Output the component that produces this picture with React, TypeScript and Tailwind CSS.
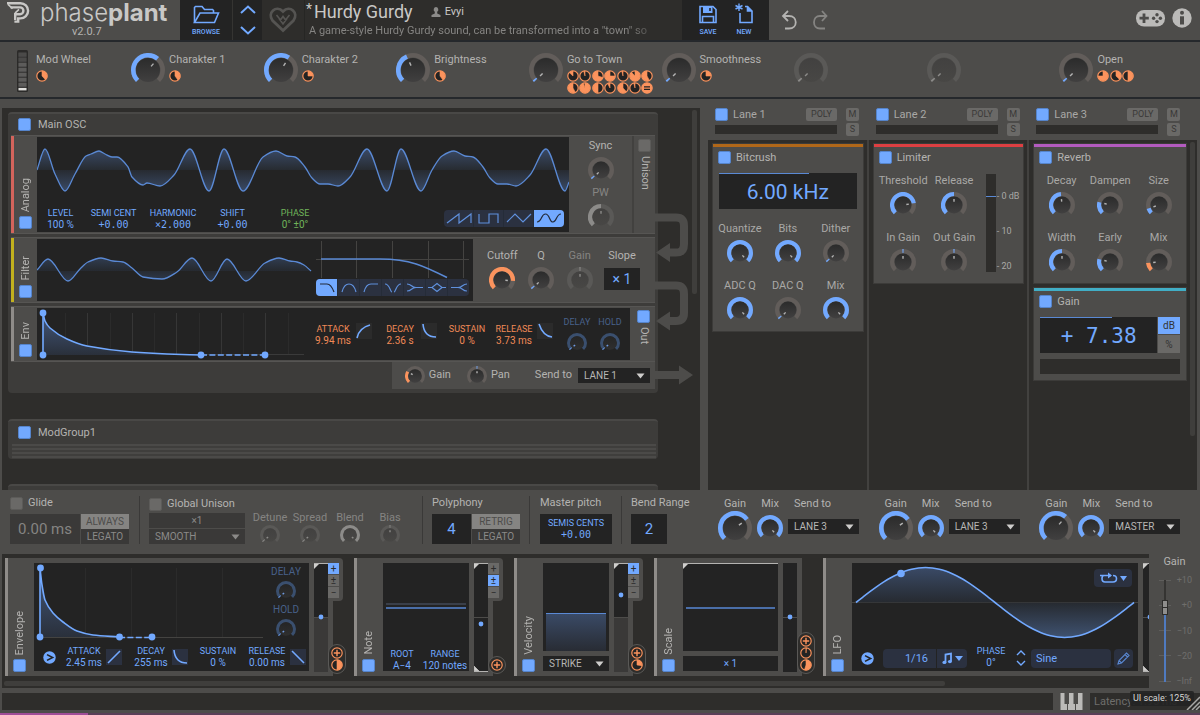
import React, { useId, useState } from 'react'

type Pt = [number, number]

// monotone cubic through the points, so that peaks stay flat
function smooth(pts: Pt[]) {
  const slopes = pts.slice(1).map((p, i) => (p[1] - pts[i][1]) / (p[0] - pts[i][0]))
  const tangents = pts.map((_, i) => {
    if (i === 0) return slopes[0]
    if (i === pts.length - 1) return slopes[i - 1]
    const a = slopes[i - 1]
    const b = slopes[i]
    return a * b <= 0 ? 0 : (2 * a * b) / (a + b)
  })
  let d = `M${pts[0][0]} ${pts[0][1]}`
  for (let i = 1; i < pts.length; i++) {
    const dx = (pts[i][0] - pts[i - 1][0]) / 3
    d += `C${pts[i - 1][0] + dx} ${pts[i - 1][1] + tangents[i - 1] * dx} ${pts[i][0] - dx} ${pts[i][1] - tangents[i] * dx} ${pts[i][0]} ${pts[i][1]}`
  }
  return d
}

const analogWave: Pt[] = [
  [37, 170], [45, 149], [55, 174], [65, 191], [75, 174], [86, 156], [91, 154], [99, 151], [105, 154], [112, 157], [117, 157],
  [128, 167], [132, 177], [143, 185], [147, 183], [160, 186], [174, 175], [190, 149], [209, 191], [224, 149],
  [243, 191], [263, 157], [276, 151], [287, 156], [295, 157], [305, 167], [312, 178], [320, 184], [328, 184],
  [338, 186], [350, 177], [367, 149], [387, 191], [401, 149], [421, 191], [432, 170], [442, 156], [454, 151],
  [465, 156], [473, 157], [483, 167], [490, 178], [498, 184], [507, 184], [516, 186], [530, 175], [546, 149],
  [565, 191], [569, 182],
]

const filterWave: Pt[] = [
  [37, 270], [48, 259], [68, 281], [80, 269], [88, 262], [101, 258], [113, 261], [123, 262], [132, 268],
  [143, 277], [162, 279], [177, 272], [192, 258], [211, 281], [227, 259], [246, 281], [265, 263], [279, 258],
  [290, 261], [297, 262], [304, 265], [311, 271],
]

const envCurve: Pt[] = [
  [43, 312], [45, 320], [50, 327], [67, 338], [87, 345], [132, 351], [167, 353], [201, 354],
]

const modEnvCurve: Pt[] = [
  [40, 568], [42, 585], [45, 600], [53, 613], [63, 622], [77, 631], [93, 635], [119, 637],
]

const lfoWave: Pt[] = Array.from({ length: 41 }, (_, i) => [
  856 + (278 * i) / 40,
  602.5 - 35 * Math.sin((i / 40) * Math.PI * 2),
])

const tones = {
  blue: { track: '#625d5a', value: '#72a9ff', top: '#2b2b2b', bottom: '#414040', tick: '#b4b4b4' },
  orange: { track: '#625d5a', value: '#fb935d', top: '#2b2b2b', bottom: '#414040', tick: '#b4b4b4' },
  dim: { track: '#3a4f6e', value: '#6695de', top: '#252525', bottom: '#2f2f2f', tick: '#6f9ae0' },
  off: { track: '#5a5957', value: '#8c8b89', top: '#424140', bottom: '#484745', tick: '#8c8b89' },
}

const knobSizes = {
  lg: { size: 34, width: 4.6, cap: 12 },
  md: { size: 26, width: 4.2, cap: 8.4 },
  sm: { size: 20, width: 3.2, cap: 6.8 },
}

type KnobProps = {
  name: string
  value: number
  size?: keyof typeof knobSizes
  tone?: keyof typeof tones
  bipolar?: boolean
}

const Knob: React.FC<KnobProps> = ({ name, value, size = 'md', tone = 'blue', bipolar }) => {
  const [v, setV] = useState(value)
  const id = useId()
  const s = knobSizes[size]
  const c = tones[tone]
  const mid = s.size / 2
  const r = mid - s.width / 2
  const at = (f: number, radius: number) => {
    const a = ((f * 270 - 135) * Math.PI) / 180
    return [mid + radius * Math.sin(a), mid - radius * Math.cos(a)]
  }
  const arc = (from: number, to: number) => {
    const [x1, y1] = at(from, r)
    const [x2, y2] = at(to, r)
    return `M${x1} ${y1}A${r} ${r} 0 ${to - from > 0.667 ? 1 : 0} 1 ${x2} ${y2}`
  }
  const from = bipolar ? Math.min(0.49, v) : 0
  const to = bipolar ? Math.max(0.51, v) : Math.max(0.025, v)
  const [px, py] = at(v, s.cap * 0.4)
  const [qx, qy] = at(v, s.cap * 0.7)
  return (
    <span className="relative block shrink-0">
      <svg width={s.size} height={s.size} className="block">
        <linearGradient id={id} x1="0" y1="0" x2="0" y2="1">
          <stop offset="0" stopColor={c.top} />
          <stop offset="1" stopColor={c.bottom} />
        </linearGradient>
        <path d={arc(0, 1)} fill="none" stroke={c.track} strokeWidth={s.width} />
        <path d={arc(from, to)} fill="none" stroke={c.value} strokeWidth={s.width} />
        <circle cx={mid} cy={mid} r={s.cap} fill={`url(#${id})`} />
        <path d={`M${px} ${py}L${qx} ${qy}`} stroke={c.tick} strokeWidth="1.4" />
      </svg>
      <input
        type="range"
        min="0"
        max="1"
        step="0.01"
        value={v}
        aria-label={name}
        onChange={(e) => setV(Number(e.target.value))}
        className="absolute inset-0 w-full h-full opacity-0"
      />
    </span>
  )
}

const KnobLabel: React.FC<KnobProps & { muted?: boolean }> = ({ muted, ...knob }) => (
  <div className="flex flex-col items-center gap-1">
    <span className={muted ? 'leading-[14px] whitespace-nowrap text-[#858482]' : 'leading-[14px] whitespace-nowrap'}>{knob.name}</span>
    <Knob {...knob} />
  </div>
)

const boxStyle =
  'appearance-none block shrink-0 w-[13px] h-[13px] rounded-xs border border-[#5c5b59] bg-[#6a6967] checked:bg-[#72a9ff] checked:border-[#5584cb]'

const Led: React.FC<{ label: string; on?: boolean; className?: string }> = ({ label, on = true, className = '' }) => (
  <label className={`flex items-center whitespace-nowrap leading-[14px] ${className}`}>
    <input type="checkbox" defaultChecked={on} className={boxStyle} />
    {label}
  </label>
)

// upright strip at the left of a module: name reads bottom to top
const SideLabel: React.FC<{ label: string; stripe: string }> = ({ label, stripe }) => (
  <label className={`flex flex-col items-center justify-end gap-1 shrink-0 w-[26px] pb-1 border-l-3 ${stripe}`}>
    <span className="[writing-mode:vertical-rl] rotate-180 leading-[14px]">{label}</span>
    <input type="checkbox" defaultChecked className={boxStyle} />
  </label>
)

// amount of a modulation: wedge grows clockwise, negative the other way
const Pie: React.FC<{ v: number | 'plus' | 'equal' }> = ({ v }) => {
  let wedge = null
  if (typeof v === 'number') {
    const a = v * 2 * Math.PI
    wedge = (
      <path
        d={`M6 6V1A5 5 0 ${Math.abs(v) > 0.5 ? 1 : 0} ${v > 0 ? 1 : 0} ${6 + 5 * Math.sin(a)} ${6 - 5 * Math.cos(a)}Z`}
        fill="#fb935d"
        stroke="#fb935d"
        strokeWidth="0.6"
      />
    )
  }
  return (
    <svg width="12" height="12" className="block">
      <circle cx="6" cy="6" r="5.2" fill={v === 'equal' ? '#fb935d' : '#232323'} stroke="#fb935d" strokeWidth="1.2" />
      {wedge}
      {v === 'plus' && <path d="M6 2.8V9.2M2.8 6H9.2" stroke="#fb935d" strokeWidth="1.4" />}
      {v === 'equal' && <path d="M3 4.8H9M3 7.4H9" stroke="#232323" strokeWidth="1.2" />}
    </svg>
  )
}

const Select: React.FC<{ name: string; value: string; className?: string; muted?: boolean }> = ({ name, value, className = '', muted }) => (
  <div className={`relative ${className}`}>
    <select
      aria-label={name}
      defaultValue={value}
      className={
        muted
          ? 'appearance-none block w-full h-full pl-[6px] text-[10px] bg-[#3a3938] text-[#8b8a88]'
          : 'appearance-none block w-full h-full pl-[6px] text-[10px] bg-[#232323] text-[#b8b7b5]'
      }
    >
      <option>{value}</option>
    </select>
    <svg width="9" height="6" className="absolute right-[5px] top-1/2 -translate-y-1/2 pointer-events-none">
      <path d="M0.5 0.5H8.5L4.5 5.5Z" fill={muted ? '#8b8a88' : '#cfcecc'} />
    </svg>
  </div>
)

const Value: React.FC<{ label: string; value: string; className?: string; mono?: boolean }> = ({ label, value, className = '', mono }) => (
  <div className={`flex flex-col items-center shrink-0 whitespace-nowrap leading-[12px] ${className}`}>
    <span className="text-[9px]">{label}</span>
    <span className={mono ? "text-[10px] font-['DejaVu_Sans_Mono',monospace]" : 'text-[10px]'}>{value}</span>
  </div>
)

const CurveIcon: React.FC<{ d: string; name: string; bg?: string }> = ({ d, name, bg = 'bg-[#2b2b2b]' }) => (
  <button aria-label={name} className={`shrink-0 w-4 h-4 ${bg}`}>
    <svg width="16" height="16" className="block">
      <path d={d} fill="none" stroke="#72a9ff" strokeWidth="1.6" />
    </svg>
  </button>
)

const Header = () => (
  <header className="flex h-[42px] shrink-0 border-b-2 border-[#25282c]">
    <div className="flex w-[180px] shrink-0">
      <svg width="24" height="24" className="block ml-[6px] shrink-0" fill="none" stroke="#c9c8c6">
        <path d="M1 3.2H14.5A7.6 7.6 0 0 1 14.5 18.4H12.2V21.6H8.4" strokeWidth="2.4" />
        <path d="M4.5 7.4H14A3.4 3.4 0 0 1 14 14.2H9.2V20" strokeWidth="2.4" />
        <path d="M2 4.4L6.5 8.6M9 13.2L13 9.4" strokeWidth="1.6" />
      </svg>
      <div className="ml-[10px]">
        <h1 className="font-[Inter,sans-serif] text-[24px] leading-[25px] font-light text-[#c9c8c6] whitespace-nowrap">
          phase<b className="font-bold">plant</b>
        </h1>
        <p className="ml-8 leading-[14px]">v2.0.7</p>
      </div>
    </div>
    <button className="flex flex-col items-center w-[53px] shrink-0 pt-[5px] gap-1 bg-[#232323] border-r border-[#353432] text-[#72a9ff]">
      <svg width="28" height="19" fill="none" stroke="#72a9ff" strokeWidth="1.6">
        <path d="M2.5 17.5V2.5L3.5 1.5H10L12.5 4.5H20.5L21.5 5.5V8" />
        <path d="M2.5 17.5L8 8H26.5L22.5 17.5Z" />
      </svg>
      <span className="text-[7px] leading-[9px] font-medium">BROWSE</span>
    </button>
    <div className="flex flex-col justify-between w-[29px] shrink-0 items-center py-[5px] bg-[#232323]">
      {['M1 8L8 1.5L15 8', 'M1 1L8 7.5L15 1'].map((d, i) => (
        <button key={d} aria-label={i ? 'Next preset' : 'Previous preset'}>
          <svg width="16" height="9" className="block" fill="none" stroke="#72a9ff" strokeWidth="2">
            <path d={d} />
          </svg>
        </button>
      ))}
    </div>
    <button aria-label="Favourite" className="flex items-center justify-center w-[43px] shrink-0 bg-[#2e2d2b] border-r border-[#262624]">
      <svg width="30" height="28" fill="none" stroke="#555452">
        <path d="M15 24.5L4.5 14.5C-1 7 8 -1.5 15 5.5C22 -1.5 31 7 25.5 14.5Z" strokeWidth="2.8" />
        <path d="M8.5 9L12.5 14L15 10.5L17.5 14L21.5 9M11 12.5L15 18L19 12.5" strokeWidth="1.6" />
      </svg>
    </button>
    <div className="flex flex-col flex-1 min-w-0 max-w-[377px] bg-[#2e2d2b] pl-px">
      <div className="flex items-center h-[24px] text-[#c9c8c6]">
        <span className="text-[14px] leading-[18px] w-[8px] mb-[6px]">*</span>
        <span className="text-[18px] leading-[24px]">Hurdy Gurdy</span>
        <svg width="10" height="10" className="ml-[18px] mr-[4px]" fill="#8c8b89">
          <path d="M5 0a2.4 2.6 0 0 1 1.2 4.8V6.4L9.5 8V10H.5V8L3.8 6.4V4.8A2.4 2.6 0 0 1 5 0Z" />
        </svg>
        <span className="pt-px">Evyi</span>
      </div>
      <p className="overflow-hidden whitespace-nowrap leading-[14px] w-[354px] ml-[3px] text-[#858482] [mask-image:linear-gradient(to_right,black_90%,transparent)]">
        A game-style Hurdy Gurdy sound, can be transformed into a "town" so
      </p>
    </div>
    <div className="flex w-[87px] shrink-0 pl-2 bg-[#232323] text-[#72a9ff] text-[7px] font-medium">
      <button className="flex flex-col items-center w-[36px] pt-[5px] gap-1">
        <svg width="20" height="19" fill="none" stroke="#72a9ff" strokeWidth="1.6">
          <path d="M2 1.5H15L18 4.5V17.5H2Z" />
          <path d="M5 1V8H14.5V1Z" fill="#72a9ff" stroke="none" />
          <path d="M12 3V6" stroke="#232323" />
          <path d="M4.5 17V11.5H15.5V17" />
        </svg>
        <span className="leading-[9px]">SAVE</span>
      </button>
      <button className="flex flex-col items-center w-[36px] pt-[3px] gap-1">
        <svg width="20" height="21" fill="none" stroke="#72a9ff" strokeWidth="1.6">
          <path d="M11 3.5H13.5L18 8V19.5H6V10" />
          <path d="M13.5 3.5V8H18" fill="#72a9ff" />
          <path d="M5 0.5V8M1.5 2.5L8.5 6M8.5 2.5L1.5 6" strokeWidth="1.4" />
        </svg>
        <span className="leading-[9px]">NEW</span>
      </button>
    </div>
    <div className="flex items-center gap-[14px] pl-3 mr-auto">
      <button aria-label="Undo">
        <svg width="17" height="21" className="block" fill="none" stroke="#b4b3b1" strokeWidth="1.8">
          <path d="M7 1L2 6L7 11M2 6H8C17 6 17 18.5 8 18.5H4" />
        </svg>
      </button>
      <button aria-label="Redo">
        <svg width="17" height="21" className="block" fill="none" stroke="#858482" strokeWidth="1.8">
          <path d="M10 1L14.5 6L10 11M14.5 6H8C0 6 0 18.5 8 18.5H13" />
        </svg>
      </button>
    </div>
    <div className="flex items-center gap-[7px] pr-2 mb-1">
      <button aria-label="Controller">
        <svg width="29" height="17" className="block">
          <rect width="29" height="16.5" rx="8" fill="#bbbab8" />
          <path d="M8 3.5V13M3.5 8.2H12.8" stroke="#4d4c4a" strokeWidth="2.8" />
          <g fill="#4d4c4a">
            <circle cx="21" cy="4.8" r="1.7" />
            <circle cx="21" cy="11.6" r="1.7" />
            <circle cx="17.6" cy="8.2" r="1.7" />
            <circle cx="24.4" cy="8.2" r="1.7" />
          </g>
        </svg>
      </button>
      <button aria-label="About">
        <svg width="20" height="20" className="block">
          <circle cx="10" cy="10" r="9.7" fill="#bbbab8" />
          <circle cx="10" cy="4.8" r="2" fill="#4d4c4a" />
          <path d="M10 8.3V16.5" stroke="#4d4c4a" strokeWidth="4" />
        </svg>
      </button>
    </div>
  </header>
)

type Macro = { name: string; value: number; pies: (number | 'equal')[]; off?: boolean }

const macros: Macro[] = [
  { name: 'Charakter 1', value: 0.65, pies: [0.4] },
  { name: 'Charakter 2', value: 0.62, pies: [0.25] },
  { name: 'Brightness', value: 0.41, pies: [0.4] },
  { name: 'Go to Town', value: 0, pies: [-0.13, -0.04, -0.7, -0.75, -0.04, 0.88, -0.58, -0.58, 0.95, -0.5, -0.08, -0.62, -0.04, 'equal'] },
  { name: 'Smoothness', value: 0, pies: [0.25] },
  { name: '', value: 0, pies: [], off: true },
  { name: '', value: 0, pies: [], off: true },
  { name: 'Open', value: 0, pies: [0.75, 0.37, 0.5] },
]

const Macros = () => (
  <section className="flex h-[57px] shrink-0 pt-[11px] pr-2 border-b-2 border-[#25282c]">
    <div className="flex w-[131px] shrink-0 pl-[17px] gap-2">
      <svg width="11" height="42" className="block mt-[-3px]">
        <rect width="11" height="42" rx="1.5" fill="#2b2a29" />
        <rect x="1.5" y="2" width="8" height="38" fill="#3c3b3a" />
        {[3, 8, 13, 18, 23, 28, 33].map((y, i) => (
          <rect key={y} x="1.5" y={y} width="8" height="3.6" fill={i < 2 ? '#4b4a49' : '#5d5c5b'} />
        ))}
        <rect x="1.5" y="38" width="8" height="2.4" fill="#e0dfdd" />
      </svg>
      <div className="leading-[14px]">
        Mod Wheel
        <div className="mt-[3px]">
          <Pie v={0.38} />
        </div>
      </div>
    </div>
    <div className="grid grid-cols-8 flex-1">
      {macros.map((m, i) => (
        <div key={i} className="flex gap-[4px]">
          <Knob name={m.name || `Macro ${i + 1}`} value={m.value} size="lg" tone={m.off ? 'off' : 'blue'} />
          <div className="leading-[14px] whitespace-nowrap">
            {m.name}
            <div className="grid grid-cols-7 mt-[3px] w-[87px]">
              {m.pies.map((v, k) => (
                <Pie key={k} v={v} />
              ))}
            </div>
          </div>
        </div>
      ))}
    </div>
  </section>
)

const segmentStyle = 'flex items-center justify-center border-r border-[#252c38] last:border-0'

const Segments: React.FC<{ names: string[]; icons: string[]; active: number; cell: string; view: string }> = ({ names, icons, active, cell, view }) => {
  const [sel, setSel] = useState(active)
  return (
    <div className="flex h-[17px] rounded overflow-hidden bg-[#2b3140]">
      {icons.map((d, i) => (
        <button key={d} aria-label={names[i]} onClick={() => setSel(i)} className={`${segmentStyle} ${cell} ${i === sel ? 'bg-[#72a9ff]' : ''}`}>
          <svg viewBox={view} className="h-[13px]" fill="none" stroke={i === sel ? '#232b3a' : '#5f90dc'} strokeWidth="1.2">
            <path d={d} />
          </svg>
        </button>
      ))}
    </div>
  )
}

const AnalogModule = () => (
  <div className="flex bg-[#4d4c4a] border-y border-[#565553] h-[99px]">
    <SideLabel label="Analog" stripe="border-[#d3645c]" />
    <div className="flex flex-col flex-1 min-w-0 my-px bg-[#232323] text-[#72a9ff]">
      <svg viewBox="37 137 532 68" preserveAspectRatio="none" className="block w-full h-[68px]">
        <linearGradient id="wave" gradientUnits="userSpaceOnUse" x1="0" y1="149" x2="0" y2="191">
          <stop offset="0" stopColor="#3a4a66" />
          <stop offset="0.5" stopColor="#272b31" />
          <stop offset="1" stopColor="#3a4a66" />
        </linearGradient>
        <path d={`${smooth(analogWave)}V170H37Z`} fill="url(#wave)" />
        <path d={smooth(analogWave)} fill="none" stroke="#5a89d4" strokeWidth="1.3" />
      </svg>
      <div className="flex pt-[2px] pr-[5px] items-start">
        <Value label="LEVEL" value="100 %" className="w-[47px]" />
        <Value label="SEMI CENT" value="+0.00" className="w-[59px]" mono />
        <Value label="HARMONIC" value="×2.000" className="w-[60px]" mono />
        <Value label="SHIFT" value="+0.00" className="w-[59px]" mono />
        <Value label="PHASE" value="0° ±0°" className="w-[66px] text-[#70b35a]" />
        <div className="ml-auto mt-[3px]">
          <Segments
            names={['Saw', 'Square', 'Triangle', 'Sine']}
            view="0 0 26 13"
            cell="w-[30px]"
            active={3}
            icons={['M1 11L13 2V11L25 2V11', 'M3 2V11H13V2H22V11', 'M1 10L9 2L17 10L25 2', 'M1 10C6 10 5 2 9.5 2S13 10 17 10S20 2 25 2']}
          />
        </div>
      </div>
    </div>
    <div className="flex flex-col items-center w-[63px] shrink-0 pt-[3px] gap-[3px]">
      <KnobLabel name="Sync" value={0} />
      <KnobLabel name="PW" value={0.5} tone="off" muted />
    </div>
    <label className="flex flex-col items-center w-[23px] shrink-0 pt-[3px] gap-1 border-l-2 border-[#42413f]">
      <input type="checkbox" className={boxStyle} />
      <span className="[writing-mode:vertical-rl] leading-[14px]">Unison</span>
    </label>
  </div>
)

const FilterModule = () => (
  <div className="flex bg-[#4d4c4a] border-y border-[#565553] h-[66px]">
    <SideLabel label="Filter" stripe="border-[#c2b11e]" />
    <div className="flex flex-1 min-w-0 my-px bg-[#232323]">
      <svg viewBox="37 239 278 62" preserveAspectRatio="none" className="block flex-1 min-w-0 h-[62px]">
        <linearGradient id="filtered" gradientUnits="userSpaceOnUse" x1="0" y1="258" x2="0" y2="282">
          <stop offset="0" stopColor="#303c50" />
          <stop offset="0.5" stopColor="#262a30" />
          <stop offset="1" stopColor="#303c50" />
        </linearGradient>
        <path d={`${smooth(filterWave)}H37Z`} fill="url(#filtered)" />
        <path d={smooth(filterWave)} fill="none" stroke="#5a89d4" strokeWidth="1.3" />
      </svg>
      <div className="w-[158px] shrink-0">
        <svg viewBox="315 239 158 40" className="block w-[158px] h-10">
          <path d="M321.5 241V278M356.5 241V278M392.5 241V278M428.5 241V278M463.5 241V278M316 259.5H469" stroke="#444341" />
          <path d="M321 259H380C410 259 424 266 447 277.5" fill="none" stroke="#5a89d4" strokeWidth="1.6" />
        </svg>
        <div className="w-[153px] ml-px">
          <Segments
            names={['Low pass', 'Band pass', 'High pass', 'Notch', 'Low shelf', 'Peak', 'High shelf']}
            view="0 0 18 13"
            cell="flex-1"
            active={0}
            icons={[
              'M2 3H9Q13 3 16 11',
              'M2 11Q4 3 9 3T16 11',
              'M2 11Q4 3 9 3H16',
              'M1 3C6 3 6 11 8 11M17 3C12 3 12 11 10 11',
              'M1 3C6 3 5 6.5 10 6.5H17M1 10C6 10 5 6.5 10 6.5',
              'M0 6.5H4L9 2.5L14 6.5H18M4 6.5L9 10.5L14 6.5',
              'M17 3C12 3 13 6.5 8 6.5H1M17 10C12 10 13 6.5 8 6.5',
            ]}
          />
        </div>
      </div>
    </div>
    <div className="flex w-[182px] shrink-0 pt-[11px] pl-[10px]">
      <div className="grid grid-cols-3 w-[116px]">
        <KnobLabel name="Cutoff" value={0.85} tone="orange" />
        <KnobLabel name="Q" value={0} />
        <KnobLabel name="Gain" value={0.5} tone="off" bipolar muted />
      </div>
      <div className="flex flex-col items-center gap-[5px] w-[46px]">
        <span className="leading-[14px]">Slope</span>
        <span className="w-9 h-[22px] text-center text-[14px] leading-[22px] bg-[#232323] text-[#72a9ff]">× 1</span>
      </div>
    </div>
  </div>
)

const EnvModule = () => (
  <div className="flex bg-[#4d4c4a] border-y border-[#565553] h-[56px]">
    <SideLabel label="Env" stripe="border-[#8f8c89]" />
    <div className="flex flex-1 min-w-0 my-px bg-[#232323] text-[#f08a57]">
      <svg viewBox="37 307 273 52" preserveAspectRatio="none" className="block flex-1 min-w-0 h-[52px]">
        <linearGradient id="env" x1="0" y1="0" x2="0" y2="1">
          <stop offset="0" stopColor="#43587c" />
          <stop offset="1" stopColor="#2a303b" />
        </linearGradient>
        {[65, 87, 110, 132, 154, 176, 199, 221, 243, 265, 288].map((x, i) => (
          <path key={x} d={`M${x + 0.5} 312V354`} stroke={i % 2 ? '#363636' : '#2b2b2b'} />
        ))}
        <path d="M43 353.5H304" stroke="#3a3a3a" />
        <path d={`${smooth(envCurve)}H43Z`} fill="url(#env)" />
        <path d={smooth(envCurve)} fill="none" stroke="#72a9ff" strokeWidth="1.6" />
        <path d="M43 354V312" stroke="#72a9ff" strokeWidth="1.6" />
        <path d="M201 354H265" stroke="#72a9ff" strokeWidth="1.4" strokeDasharray="6 2.4" />
        {[[43, 312], [43, 354], [201, 354], [265, 354]].map(([x, y]) => (
          <circle key={x + y} cx={x} cy={y} r="3.4" fill="#72a9ff" />
        ))}
      </svg>
      <div className="flex shrink-0 w-[320px] pt-[15px]">
        <Value label="ATTACK" value="9.94 ms" className="w-[46px]" />
        <CurveIcon name="Attack curve" d="M1 15Q3 5 14 2" />
        <Value label="DECAY" value="2.36 s" className="w-[42px] ml-[7px]" />
        <CurveIcon name="Decay curve" d="M2 1Q3 14 15 14" />
        <Value label="SUSTAIN" value="0 %" className="w-[46px] ml-[7px]" />
        <Value label="RELEASE" value="3.73 ms" className="w-[46px] ml-px" />
        <CurveIcon name="Release curve" d="M2 1Q6 13 15 14" />
        <div className="flex gap-[5px] mt-[-6px] ml-[10px] text-[9px] text-[#48618a]">
          {['DELAY', 'HOLD'].map((n) => (
            <div key={n} className="flex flex-col items-center w-7 gap-[6px] leading-[10px]">
              {n}
              <Knob name={n} value={0} size="sm" tone="dim" />
            </div>
          ))}
        </div>
      </div>
    </div>
    <label className="flex flex-col items-center w-[25px] shrink-0 pt-[3px] pl-[2px] gap-1">
      <input type="checkbox" defaultChecked className={boxStyle} />
      <span className="[writing-mode:vertical-rl] leading-[14px]">Out</span>
    </label>
  </div>
)

const Generators = () => (
  <section className="flex flex-1 min-w-0 mt-[9px] ml-[2px] bg-[#2e2d2b] overflow-hidden">
    <div className="flex-1 min-w-0 pl-[6px] pt-[4px]">
      <div className="h-[281px] rounded border-t-2 border-[#494846] bg-[#3d3c3a] pl-[3px] pr-[3px]">
        <Led label="Main OSC" className="h-[21px] pl-[7px] gap-[7px]" />
        <div className="flex flex-col gap-[3px]">
          <AnalogModule />
          <FilterModule />
          <EnvModule />
        </div>
        <div className="flex items-center justify-end">
          <div className="flex items-center h-[27px] pl-[13px] pr-[5px] bg-[#4d4c4a]">
            <Knob name="Output gain" value={0.28} size="sm" tone="orange" />
            <span className="ml-[4px]">Gain</span>
            <span className="ml-4">
              <Knob name="Pan" value={0.5} size="sm" bipolar />
            </span>
            <span className="ml-[4px]">Pan</span>
            <span className="ml-[25px] mr-[6px]">Send to</span>
            <Select name="Group output" value="LANE 1" className="w-[72px] h-[15px]" />
          </div>
        </div>
      </div>
      <div className="mt-[26px] h-[40px] rounded border-t-2 border-[#494846] bg-[#3d3c3a]">
        <Led label="ModGroup1" className="h-[23px] pl-[10px] gap-[7px]" />
        <div className="h-[15px] ml-1 mr-[2px] bg-[repeating-linear-gradient(to_bottom,#4b4a48_0px,#4b4a48_2px,#3f3e3c_2px,#3f3e3c_4px)]"></div>
      </div>
      <div className="mt-[25px] h-6 rounded border-t-2 border-[#494846] bg-[#3d3c3a]"></div>
    </div>
    <svg width="37" height="290" viewBox="655 108 37 290" className="block shrink-0 -ml-[3px] z-10 overflow-visible" fill="none">
      <g stroke="#4d4c4a" strokeWidth="8">
        <path d="M655 217.5H676Q684 217.5 684 226V244Q684 252.5 676 252.5H669" />
        <path d="M655 285.5H676Q684 285.5 684 294V313Q684 321 676 321H669" />
        <path d="M655 375H680" />
      </g>
      <path d="M656 252.5L670 243V262ZM656 321L670 311.5V330.5ZM693 375L679 365.5V384.5Z" fill="#4d4c4a" />
    </svg>
    <div className="w-[5px] h-[184px] mt-[2px] mr-[3px] shrink-0 rounded-xs bg-[#3f3e3c]"></div>
  </section>
)

const Card: React.FC<{ title: string; stripe: string; children: React.ReactNode }> = ({ title, stripe, children }) => (
  <div className={`border-t-3 ${stripe} bg-[#4d4c4a] ring-1 ring-[#3c3b39]`}>
    <Led label={title} className="h-[21px] pl-[5px] gap-[5px] text-[#b4b3b1]" />
    {children}
  </div>
)

const smallButton = 'block rounded-xs bg-[#6a6967] text-[9px] leading-[13px] text-[#3a3938] text-center'

const LaneHeader: React.FC<{ n: number }> = ({ n }) => (
  <div className="grid grid-cols-[122px_13px] gap-x-[9px] gap-y-[2px] pl-[7px] pt-[9px] h-[41px] content-start">
    <div className="flex items-center justify-between h-[13px]">
      <Led label={`Lane ${n}`} className="gap-[5px]" />
      <button className={`${smallButton} w-[31px]`}>POLY</button>
    </div>
    <button className={`${smallButton} w-[13px]`}>M</button>
    <div className="h-[9px] mt-[2px] bg-[#2e2d2b]"></div>
    <button className={`${smallButton} w-[13px]`}>S</button>
  </div>
)

const Lanes = () => (
  <section className="flex w-[500px] shrink-0 pl-2 pr-[3px] text-[#a9a8a6]">
    <div className="flex flex-col flex-1">
      <div className="grid grid-cols-3">
        <LaneHeader n={1} />
        <LaneHeader n={2} />
        <LaneHeader n={3} />
      </div>
      <div className="grid grid-cols-3 flex-1 bg-[#2e2d2b] divide-x-2 divide-[#42413f]">
        <div className="pt-[4px] pl-[5px] pr-[4px]">
          <Card title="Bitcrush" stripe="border-[#b06719]">
            <div className="mx-[6px] mt-[5px] h-[36px] bg-[#232323] text-[#72a9ff]">
              <div className="w-[90px] h-px bg-[#5a89d4]"></div>
              <p className="text-[21px] leading-[36px] text-center">6.00 kHz</p>
            </div>
            <div className="grid grid-cols-3 gap-y-[13px] px-[3px] pt-[13px] pb-2">
              <KnobLabel name="Quantize" value={1} />
              <KnobLabel name="Bits" value={1} />
              <KnobLabel name="Dither" value={0} />
              <KnobLabel name="ADC Q" value={1} />
              <KnobLabel name="DAC Q" value={0} />
              <KnobLabel name="Mix" value={1} />
            </div>
          </Card>
        </div>
        <div className="pt-[4px] pl-[5px] pr-[4px]">
          <Card title="Limiter" stripe="border-[#dd3f42]">
            <div className="flex pt-[6px] pb-2">
              <div className="grid grid-cols-2 w-[106px] gap-y-[13px] pl-1 shrink-0">
                <KnobLabel name="Threshold" value={0.8} />
                <KnobLabel name="Release" value={0.5} />
                <KnobLabel name="In Gain" value={0.5} bipolar />
                <KnobLabel name="Out Gain" value={0.5} bipolar />
              </div>
              <div className="w-[10px] h-[98px] ml-[6px] shrink-0 bg-[#2e2d2b]">
                <div className="h-px mt-[22px] bg-[#5a89d4]"></div>
              </div>
              <div className="flex flex-col justify-between h-[82px] mt-[16px] ml-px text-[9px] leading-[12px] whitespace-nowrap">
                <span>- 0 dB</span>
                <span>- 10</span>
                <span>- 20</span>
              </div>
            </div>
          </Card>
        </div>
        <div className="flex flex-col gap-[5px] pt-[4px] pl-[5px] pr-[4px]">
          <Card title="Reverb" stripe="border-[#b35bbf]">
            <div className="grid grid-cols-3 gap-y-[13px] px-[3px] pt-[6px] pb-2">
              <KnobLabel name="Decay" value={0.48} />
              <KnobLabel name="Dampen" value={0.22} />
              <KnobLabel name="Size" value={0.1} />
              <KnobLabel name="Width" value={0.5} />
              <KnobLabel name="Early" value={0.22} />
              <KnobLabel name="Mix" value={0.15} tone="orange" />
            </div>
          </Card>
          <Card title="Gain" stripe="border-[#41aec6]">
            <div className="flex mx-[6px] mt-[5px] gap-px">
              <div className="flex-1 h-[36px] bg-[#232323] text-[#72a9ff]">
                <div className="w-[72px] h-px bg-[#5a89d4]"></div>
                <p className="text-[21px] leading-[36px] text-center whitespace-pre font-['DejaVu_Sans_Mono',monospace]">+ 7.38</p>
              </div>
              <div className="flex flex-col w-[22px] gap-px text-[10px] text-[#333]">
                <button className="h-[17px] bg-[#72a9ff]">dB</button>
                <button className="h-[18px] bg-[#6a6967]">%</button>
              </div>
            </div>
            <div className="mx-[6px] mt-[6px] mb-[6px] h-[15px] bg-[#2e2d2b]"></div>
          </Card>
        </div>
      </div>
    </div>
    <div className="w-[7px] mt-[41px] bg-[#2e2d2b]">
      <div className="w-[5px] h-[294px] mt-[2px] rounded-xs bg-[#3f3e3c]"></div>
    </div>
  </section>
)

const Divider = () => <div className="w-px h-12 mt-[6px] shrink-0 bg-[#3a3938]"></div>

const LaneOutput: React.FC<{ n: number; to: string; gain: number }> = ({ n, to, gain }) => (
  <div className="flex pt-[7px] pl-[10px]">
    <div className="flex flex-col items-center w-[34px]">
      <span className="leading-[14px]">Gain</span>
      <Knob name={`Lane ${n} gain`} value={gain} size="lg" />
    </div>
    <div className="flex flex-col items-center w-[26px] ml-[5px] gap-1">
      <span className="leading-[14px]">Mix</span>
      <Knob name={`Lane ${n} mix`} value={1} />
    </div>
    <div className="ml-[5px]">
      <span className="block pl-[6px] leading-[14px]">Send to</span>
      <Select name={`Lane ${n} output`} value={to} className="w-[71px] h-[15px] mt-2" />
    </div>
  </div>
)

const toggleBase = 'block w-[48px] h-[15px] text-[10px] leading-[15px] text-center'

const Settings = () => (
  <section className="flex h-[64px] shrink-0">
    <div className="flex flex-1 min-w-0 justify-start pl-[10px]">
      <div className="w-[129px] shrink-0 pt-[6px]">
        <Led label="Glide" on={false} className="gap-[5px]" />
        <div className="flex gap-px mt-[4px] w-[119px]">
          <span className="flex-1 h-[30px] text-[15px] leading-[30px] text-center bg-[#3a3938] text-[#858482]">0.00 ms</span>
          <span>
            <button className={`${toggleBase} bg-[#858482] text-[#4d4c4a]`}>ALWAYS</button>
            <button className={`${toggleBase} bg-[#3a3938] text-[#8b8a88]`}>LEGATO</button>
          </span>
        </div>
      </div>
      <Divider />
      <div className="w-[96px] shrink-0 ml-[9px] pt-[7px]">
        <Led label="Global Unison" on={false} className="gap-[5px]" />
        <span className="block mt-[2px] h-[15px] text-[10px] leading-[15px] text-center bg-[#3a3938] text-[#8b8a88]">×1</span>
        <Select name="Unison mode" value="SMOOTH" muted className="h-[15px] mt-px" />
      </div>
      <div className="grid grid-cols-[40px_40px_40px_40px] ml-[5px] pt-[21px] shrink-0 text-[#858482]">
        {[['Detune', 0], ['Spread', 0], ['Blend', 1], ['Bias', 0.5]].map(([n, v]) => (
          <div key={n} className="flex flex-col items-center leading-[14px]">
            {n}
            <Knob name={n as string} value={v as number} size="sm" tone="off" bipolar={n === 'Bias'} />
          </div>
        ))}
      </div>
      <div className="w-3 shrink-0"></div>
      <Divider />
      <div className="w-[97px] ml-[9px] shrink-0 pt-[6px]">
        <span className="block leading-[14px]">Polyphony</span>
        <div className="flex gap-px mt-[4px] w-[88px]">
          <span className="flex-1 h-[30px] text-[15px] leading-[30px] text-center bg-[#232323] text-[#72a9ff]">4</span>
          <span>
            <button className={`${toggleBase} bg-[#858482] text-[#4d4c4a]`}>RETRIG</button>
            <button className={`${toggleBase} bg-[#3a3938] text-[#8b8a88]`}>LEGATO</button>
          </span>
        </div>
      </div>
      <Divider />
      <div className="w-[81px] ml-[10px] shrink-0 pt-[6px]">
        <span className="block leading-[14px] whitespace-nowrap">Master pitch</span>
        <div className="flex flex-col items-center justify-center w-[72px] h-[30px] mt-[4px] bg-[#232323] text-[#72a9ff]">
          <Value label="SEMIS CENTS" value="+0.00" mono />
        </div>
      </div>
      <Divider />
      <div className="ml-[9px] shrink-0 pt-[6px]">
        <span className="block leading-[14px] whitespace-nowrap">Bend Range</span>
        <span className="block w-9 h-[30px] mt-[4px] text-[15px] leading-[30px] text-center bg-[#232323] text-[#72a9ff]">2</span>
      </div>
    </div>
    <div className="grid grid-cols-3 w-[482px] shrink-0 mr-[10px]">
      <LaneOutput n={1} to="LANE 3" gain={0.7} />
      <LaneOutput n={2} to="LANE 3" gain={0.7} />
      <LaneOutput n={3} to="MASTER" gain={0.65} />
    </div>
  </section>
)

// depth strip and routing badges at the right of a modulator
const ModTail: React.FC<{ dot: number; polarity?: number; full?: boolean; pies: (number | 'plus')[] }> = ({ dot, polarity, full, pies }) => (
  <>
    <svg width="14" height="109" className="block shrink-0 mt-[5px] ml-[5px]">
      <rect width="14" height="109" fill={full ? '#232323' : '#3a3938'} />
      <rect width="14" height="54" fill="#232323" />
      <path d="M0 54.5H14" stroke="#4d4c4a" />
      {polarity !== undefined && <path d="M0 .5H14" stroke="#b4b3b1" />}
      {polarity !== undefined && <path d="M0 1H5L0 6Z" fill="#d0cfcd" />}
      {polarity === 1 && <path d="M0 108.5H14M0 103L5 108H0Z" fill="#d0cfcd" stroke="#b4b3b1" />}
      <circle cx="7" cy={dot} r="2.4" fill="#72a9ff" />
    </svg>
    <div className="relative w-[26px] shrink-0 bg-[#2e2d2b]">
      <div className="w-[5px] h-full bg-[#4d4c4a]"></div>
      {polarity !== undefined && (
        <div className="absolute top-0 left-0 flex flex-col gap-px w-[15px] h-[43px] pt-[5px] rounded-r bg-[#4d4c4a]">
          {['+', '±', '−'].map((s, i) => (
            <button
              key={s}
              className={
                i === polarity
                  ? 'w-[11px] h-[11px] text-[10px] leading-[11px] bg-[#72a9ff] text-[#2b2b2b]'
                  : 'w-[11px] h-[11px] text-[10px] leading-[11px] bg-[#6a6967] text-[#2b2b2b]'
              }
            >
              {s}
            </button>
          ))}
        </div>
      )}
      <div className="absolute bottom-[2px] left-0 p-[2px] border border-[#5a5957] rounded-full bg-[#2e2d2b]">
        {pies.map((v, i) => (
          <Pie key={i} v={v} />
        ))}
      </div>
    </div>
  </>
)

const ModPanel: React.FC<{ label: string; children: React.ReactNode }> = ({ label, children }) => (
  <div className="flex shrink-0 h-[118px] bg-[#4d4c4a]">
    <SideLabel label={label} stripe="border-[#8f8c89]" />
    {children}
  </div>
)

const Trigger = () => (
  <button aria-label="Retrigger" className="shrink-0">
    <svg width="13" height="13" className="block">
      <circle cx="6.5" cy="6.5" r="6.2" fill="#72a9ff" />
      <path d="M4 3.6L9.6 6.5L4 9.4" fill="none" stroke="#232323" strokeWidth="1.6" />
    </svg>
  </button>
)

const EnvelopeMod = () => (
  <ModPanel label="Envelope">
    <div className="w-[275px] ml-[3px] my-[5px] bg-[#232323] text-[#72a9ff]">
      <div className="flex">
        <svg width="229" height="82" viewBox="34 563 229 82" className="block">
          <linearGradient id="modenv" x1="0" y1="0" x2="0" y2="1">
            <stop offset="0" stopColor="#43587c" />
            <stop offset="1" stopColor="#2a303b" />
          </linearGradient>
          <path d="M85.5 568V637M131.5 568V637M176.5 568V637M222.5 568V637" stroke="#2b2b2b" />
          <path d="M40 637.5H263" stroke="#444341" />
          <path d={`${smooth(modEnvCurve)}H40Z`} fill="url(#modenv)" />
          <path d={`M40 637V568${smooth(modEnvCurve)}`} fill="none" stroke="#72a9ff" strokeWidth="1.6" />
          <path d="M119 637.5H152" stroke="#72a9ff" strokeWidth="1.5" strokeDasharray="6 2.4" />
          {[[40.5, 568], [40, 637], [119.5, 637], [152, 637]].map(([x, y]) => (
            <circle key={x} cx={x} cy={y} r="3.4" fill="#72a9ff" />
          ))}
        </svg>
        <div className="flex flex-col items-center flex-1 pt-[2px] text-[10px] text-[#48618a] leading-[14px] gap-[2px]">
          DELAY
          <Knob name="Delay" value={0} size="sm" tone="dim" />
          HOLD
          <Knob name="Hold" value={0} size="sm" tone="dim" />
        </div>
      </div>
      <div className="flex items-center h-[24px] pl-[9px]">
        <Trigger />
        <Value label="ATTACK" value="2.45 ms" className="w-[44px] ml-[6px]" />
        <CurveIcon name="Attack curve" bg="bg-[#2b3140]" d="M2 14L14 2" />
        <Value label="DECAY" value="255 ms" className="w-[42px] ml-[8px]" />
        <CurveIcon name="Decay curve" bg="bg-[#2b3140]" d="M2 1Q3 14 15 14" />
        <Value label="SUSTAIN" value="0 %" className="w-[42px] ml-[9px]" />
        <Value label="RELEASE" value="0.00 ms" className="w-[46px] ml-[5px]" />
        <CurveIcon name="Release curve" bg="bg-[#2b3140]" d="M2 2L14 14" />
      </div>
    </div>
    <ModTail dot={54} polarity={0} pies={['plus', 0.5]} />
  </ModPanel>
)

const NoteMod = () => (
  <ModPanel label="Note">
    <div className="w-[86px] ml-[3px] my-[5px] bg-[#232323] text-[#72a9ff]">
      <div className="mx-[3px] mt-[40px] border-t-2 border-b-2 border-t-[#3a3f49] border-b-[#4a6ea8] h-[6px]"></div>
      <div className="flex gap-[2px] mt-[39px]">
        <Value label="ROOT" value="A−4" className="w-[38px]" />
        <Value label="RANGE" value="120 notes" className="w-[44px]" />
      </div>
    </div>
    <ModTail dot={61} polarity={1} full pies={['plus']} />
  </ModPanel>
)

const VelocityMod = () => (
  <ModPanel label="Velocity">
    <div className="flex flex-col gap-[5px] w-[66px] ml-[3px] my-[5px]">
      <div className="flex-1 px-[3px] pt-[50px] bg-[#232323]">
        <div className="h-full border-t border-[#5a89d4] bg-linear-to-b from-[#3a4a66] to-[#282c34]"></div>
      </div>
      <Select name="Velocity mode" value="STRIKE" className="h-[15px]" />
    </div>
    <ModTail dot={32} polarity={0} pies={['plus', 0.27]} />
  </ModPanel>
)

const ScaleMod = () => (
  <ModPanel label="Scale">
    <div className="flex flex-col gap-[5px] w-[95px] ml-[3px] my-[5px] text-[#72a9ff]">
      <div className="relative flex-1 px-[3px] pt-[43px] border-t border-[#b4b3b1] bg-[#232323]">
        <div className="h-[2px] bg-[#4a6ea8]"></div>
        <svg width="5" height="5" className="absolute top-0 left-0">
          <path d="M0 0H5L0 5Z" fill="#d0cfcd" />
        </svg>
      </div>
      <span className="block h-[15px] text-center text-[10px] leading-[15px] bg-[#232323]">× 1</span>
    </div>
    <ModTail dot={54} full pies={['plus', 0.01, 0.55]} />
  </ModPanel>
)

const LfoMod = () => (
  <ModPanel label="LFO">
    <div className="relative w-[286px] ml-[3px] my-[5px] bg-[#232323] text-[#72a9ff]">
      <svg width="286" height="83" viewBox="852 563 286 83" className="block">
        <linearGradient id="lfo" x1="0" y1="0" x2="0" y2="1">
          <stop offset="0" stopColor="#3a4a66" />
          <stop offset="0.5" stopColor="#262a30" />
          <stop offset="1" stopColor="#3f5270" />
        </linearGradient>
        <path d="M852 602.5H1138" stroke="#444341" />
        <path d={smooth(lfoWave)} fill="url(#lfo)" stroke="#72a9ff" strokeWidth="1.6" />
        <circle cx="901" cy="573.5" r="3.8" fill="#72a9ff" />
      </svg>
      <button aria-label="Loop mode" className="absolute top-[6px] right-[6px] w-[38px] h-[18px] rounded bg-[#2b3140]">
        <svg width="38" height="18" className="block" fill="none" stroke="#72a9ff" strokeWidth="1.6">
          <path d="M6 6.5H17M10 6.5Q8 6.5 8 9.5Q8 13 11 13H19Q22.5 13 22.5 9.5Q22.5 6.5 19 6.5" />
          <path d="M14 3.5L18 6.5L14 9.5Z" fill="#72a9ff" stroke="none" />
          <path d="M26 7H33L29.5 12Z" fill="#72a9ff" stroke="none" />
        </svg>
      </button>
      <div className="flex items-center h-[24px] pl-[9px] pr-[5px]">
        <Trigger />
        <span className="w-[53px] h-[19px] ml-[9px] pr-2 text-right leading-[19px] rounded-l bg-[#2b3140]">1/16</span>
        <button aria-label="Note sync" className="w-[30px] h-[19px] ml-px rounded-r bg-[#2b3140]">
          <svg width="30" height="19" className="block" fill="#72a9ff">
            <path d="M8.5 13.5V5.5L14 4.5V12.5" fill="none" stroke="#72a9ff" strokeWidth="1.8" />
            <ellipse cx="7.4" cy="13.4" rx="2" ry="1.6" />
            <ellipse cx="12.9" cy="12.6" rx="2" ry="1.6" />
            <path d="M18 7H26L22 12Z" />
          </svg>
        </button>
        <Value label="PHASE" value="0°" className="w-[48px] mb-[2px]" />
        <svg width="10" height="16" className="block shrink-0 mx-px" fill="none" stroke="#72a9ff" strokeWidth="1.4">
          <path d="M1 5L5 1L9 5M1 11L5 15L9 11" />
        </svg>
        <input type="text" aria-label="Shape" defaultValue="Sine" className="flex-1 min-w-0 h-[19px] ml-1 pl-[5px] text-[11px] rounded bg-[#2b3140]" />
        <button aria-label="Edit shape" className="w-[19px] h-[19px] ml-[3px] rounded bg-[#2b3140]">
          <svg width="19" height="19" className="block" fill="none" stroke="#5a89d4" strokeWidth="1.1">
            <path d="M4 15L5 11.5L12.5 4L15 6.5L7.5 14ZM11 5.5L13.5 8M5 11.5L7.5 14" />
          </svg>
        </button>
      </div>
    </div>
    <ModTail dot={54} polarity={1} full pies={['plus']} />
  </ModPanel>
)

const GainFader = () => (
  <div className="w-[51px] shrink-0">
    <label htmlFor="master-gain" className="block leading-[14px] text-center pt-px">Gain</label>
    <div className="relative flex flex-col justify-between h-[113px] mt-[5px] ml-[10px] mr-[8px] text-[9px] leading-[12px] text-[#6f6e6c]">
      {['+10', '+0', '−10', '−20', '−Inf'].map((t) => (
        <div key={t} className="flex items-center justify-between">
          <span className="w-3 h-px bg-[#5f5e5c]"></span>
          {t}
        </div>
      ))}
      <div className="absolute left-[5px] top-[6px] bottom-[5px] w-[2px] bg-[#353432]"></div>
      <div className="absolute left-[5px] top-[36px] bottom-[5px] w-[2px] bg-[#4f7abf]"></div>
      <div className="absolute left-[3px] top-[26px] w-[6px] h-[15px] border border-[#2e2d2b] bg-[#8f8e8c]">
        <div className="h-px mt-[6px] bg-[#2e2d2b]"></div>
      </div>
      <input id="master-gain" type="range" defaultValue="70" className="absolute inset-y-0 left-0 w-3 opacity-0 [writing-mode:vertical-lr]" />
    </div>
  </div>
)

const Modulators = () => (
  <section className="flex h-[134px] shrink-0">
    <div className="flex-1 min-w-0 ml-[2px] bg-[#2e2d2b] overflow-hidden">
      <div className="flex pl-[3px] pt-[4px]">
        <EnvelopeMod />
        <NoteMod />
        <VelocityMod />
        <ScaleMod />
        <LfoMod />
      </div>
      <div className="w-[82%] h-[5px] mt-[5px] ml-[2px] bg-[#3f3e3c] rounded-xs"></div>
    </div>
    <GainFader />
  </section>
)

const Footer = () => (
  <footer className="shrink-0 h-[27px] pt-[5px]">
    <div className="flex h-[17px] pl-[2px]">
      <div className="flex-1 bg-[#2e2d2b]"></div>
      <button aria-label="Keyboard" className="mx-[7px]">
        <svg width="23" height="17" className="block">
          <path d="M.5 0H7V17H.5ZM8 0H15V17H8ZM16 0H22.5V17H16Z" fill="#bbbab8" />
          <path d="M4.5 0H9V11H4.5ZM13.5 0H18V11H13.5Z" fill="#4d4c4a" />
        </svg>
      </button>
      <div className="relative w-[110px] shrink-0 bg-[#2e2d2b] pl-1 leading-[17px] text-[#6f6e6c] whitespace-nowrap">
        Latency: 1.95 ms
        <span className="absolute left-[40px] top-[-2px] h-[15px] px-[3px] rounded-xs bg-[#232323]/90 text-[9px] leading-[15px] text-[#d8d7d5]">UI scale: 125%</span>
        <svg width="14" height="14" className="absolute right-0 bottom-0" stroke="#a9a8a6" strokeWidth="1.5">
          <path d="M1 14L14 1M6 14L14 6M10 14L14 10" />
        </svg>
      </div>
    </div>
    <div className="flex h-[2px] mt-[3px] bg-[#5a3f58]">
      <div className="w-[88px] bg-[#a04d98]"></div>
    </div>
  </footer>
)

const App: React.FC = () => {
  return (
    <div className="flex flex-col h-screen min-h-[640px] overflow-hidden bg-[#4d4c4a] font-[Roboto,sans-serif] text-[11px] text-[#b4b3b1]">
      <Header />
      <Macros />
      <main className="flex flex-1 min-h-0 overflow-hidden">
        <Generators />
        <Lanes />
      </main>
      <Settings />
      <Modulators />
      <Footer />
    </div>
  )
}

export default App
